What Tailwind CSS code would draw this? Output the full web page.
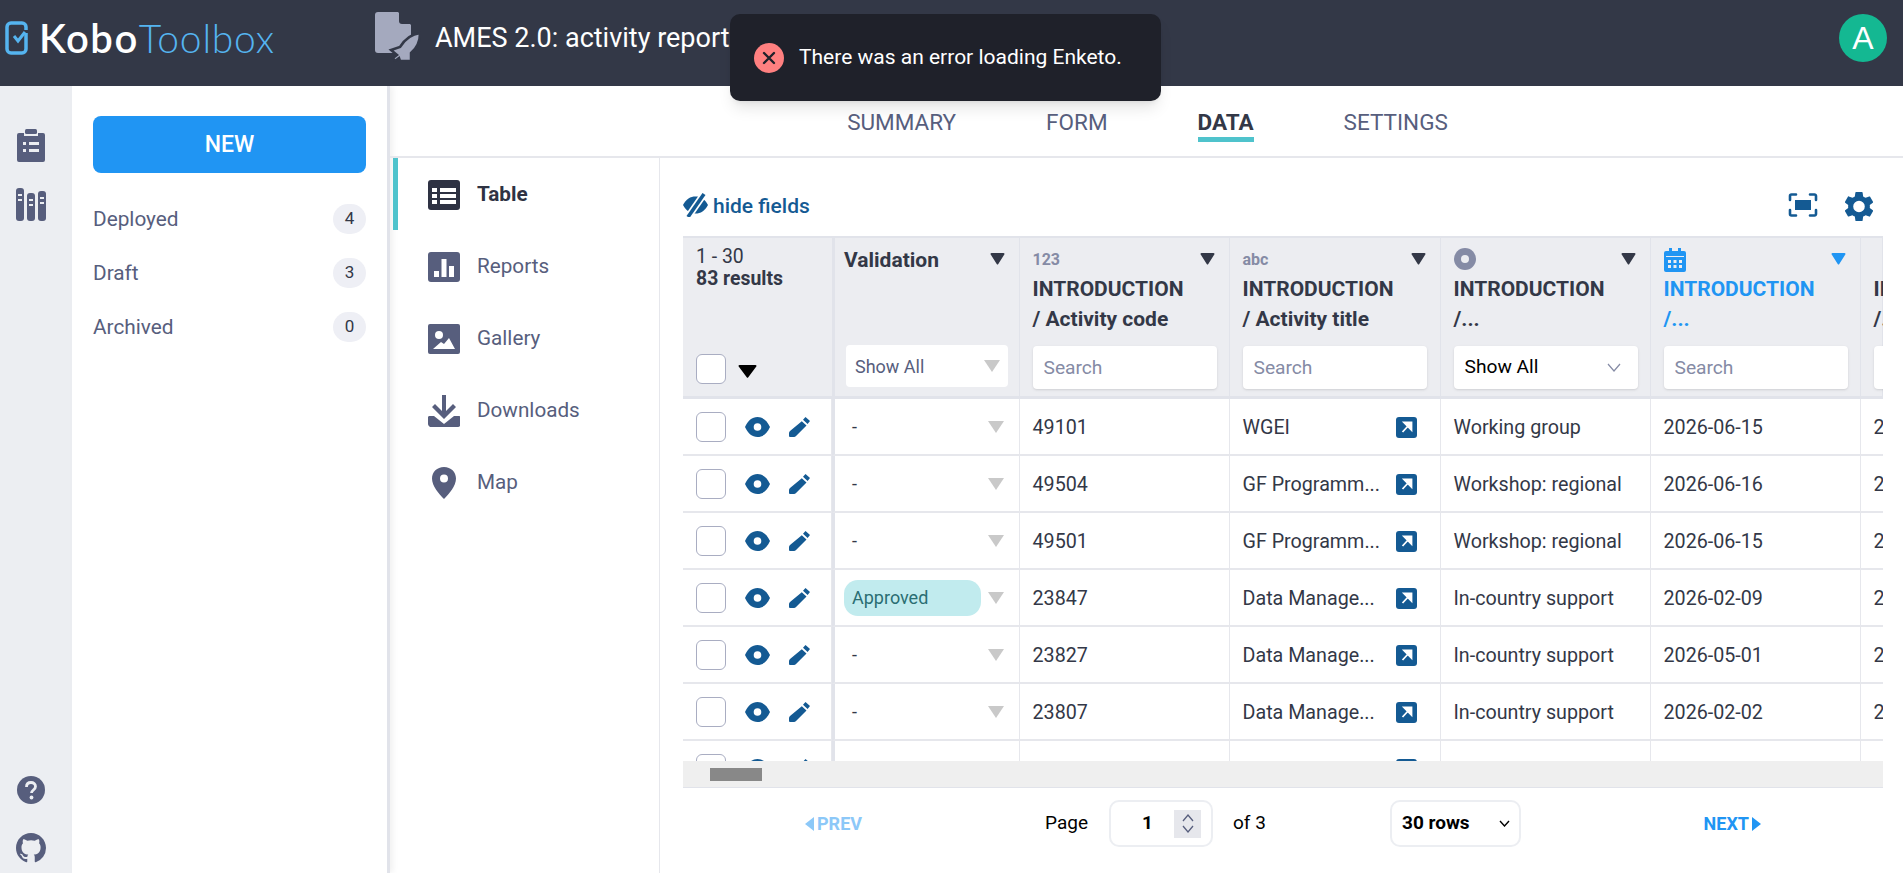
<!DOCTYPE html>
<html lang="en">
<head>
    <meta charset="UTF-8">
    <title>AMES 2.0: activity report | KoboToolbox</title>
    <script src="https://cdn.jsdelivr.net/npm/@tailwindcss/browser@4"></script>
</head>
<body class="font-['Roboto',sans-serif] h-screen overflow-hidden flex flex-col bg-white text-[#333847]">
    <!-- top bar -->
    <header class="h-[86px] shrink-0 bg-[#333847] flex items-center relative">
        <div class="w-[375px] shrink-0 flex items-center pl-[5px] mb-[10px]">
            <svg width="24" height="34" viewBox="0 0 24 34" fill="none" stroke="#55b4f0" stroke-width="3.5" class="mr-[10px]">
                <path d="M21 9V6a4 4 0 0 0-4-4H6a4 4 0 0 0-4 4v22a4 4 0 0 0 4 4h11a4 4 0 0 0 4-4V12"/>
                <path d="M9 15l4 5 7-9" stroke-width="3"/>
            </svg>
            <span class="font-['Lato',sans-serif] text-[40px] leading-none tracking-[1.500px] font-semibold text-white">Kobo</span><span class="font-['Lato',sans-serif] text-[39px] leading-none tracking-[0.800px] font-light text-[#55b4f0]">Toolbox</span>
        </div>
        <svg width="46" height="50" viewBox="0 0 46 50" class="shrink-0 mb-[12px]">
            <path d="M3 0h20l13 13v28H3a3 3 0 0 1-3-3V3a3 3 0 0 1 3-3z" fill="#a4a9be"/>
            <path d="M24 0v9a3 3 0 0 0 3 3h10V0z" fill="#333847"/>
            <path d="M45 21c-8 1-15 6-20 14l-9 3 6 5-4 3 2 3 4-3 1 3h11v-8c6-5 9-12 9-20z" fill="#a4a9be" stroke="#333847" stroke-width="2.5"/>
        </svg>
        <h1 class="ml-[14px] text-[27px] text-white mb-[9px] whitespace-nowrap">AMES 2.0: activity report</h1>
        <div class="ml-auto mr-[16px] mb-[10px] w-[48px] h-[48px] rounded-full bg-[#14b892] flex items-center justify-center text-white text-[32px] font-['Liberation_Sans',sans-serif]">A</div>
    </header>

    <!-- toast -->
    <div class="absolute left-[730px] top-[14px] w-[431px] h-[87px] bg-[#1f212a] rounded-[10px] shadow-lg flex items-center pl-[24px] text-white text-[21px]">
        <svg width="30" height="30" viewBox="0 0 30 30" class="mr-[15px] shrink-0">
            <circle cx="15" cy="15" r="15" fill="#ff8080"/>
            <path d="M10 10l10 10M20 10L10 20" stroke="#1f212a" stroke-width="2.4" stroke-linecap="round"/>
        </svg>
        There was an error loading Enketo.
    </div>

    <div class="flex flex-1 min-h-0">
        <!-- icon rail -->
        <nav class="w-[72px] shrink-0 bg-[#eceef2] flex flex-col items-center pt-[43px] pb-[10px] pr-[11px]">
            <svg width="28" height="33" viewBox="0 0 28 33">
                <path d="M2 4h5v3h14V4h5a2 2 0 0 1 2 2v25a2 2 0 0 1-2 2H2a2 2 0 0 1-2-2V6a2 2 0 0 1 2-2z" fill="#575e7d"/>
                <rect x="8" y="0" width="12" height="5" rx="1.5" fill="#575e7d"/>
                <path d="M6 13h3v3H6zM12 13h10v3H12zM6 20h3v3H6zM12 20h10v3H12z" fill="#eceef2"/>
            </svg>
            <svg width="30" height="33" viewBox="0 0 30 33" class="mt-[26px]">
                <rect x="0" y="0" width="8" height="33" rx="3" fill="#575e7d"/>
                <rect x="11" y="5" width="8" height="28" rx="3" fill="#575e7d"/>
                <rect x="22" y="3" width="8" height="30" rx="3" fill="#575e7d"/>
                <path d="M2 6h4v2H2zM2 11h4v2H2zM13 11h4v2h-4zM13 16h4v2h-4zM24 9h4v2h-4zM24 14h4v2h-4z" fill="#eceef2"/>
            </svg>
            <svg width="28" height="28" viewBox="0 0 28 28" class="mt-auto">
                <circle cx="14" cy="14" r="14" fill="#575e7d"/>
                <path d="M9.5 11c0-3 2-4.500 4.500-4.500s4.500 1.500 4.500 4c0 3.500-4 3.500-4 6.500" fill="none" stroke="#eceef2" stroke-width="2.800"/>
                <circle cx="14.500" cy="21.500" r="1.900" fill="#eceef2"/>
            </svg>
            <svg width="30" height="30" viewBox="0 0 16 16" class="mt-[29px]">
                <path fill="#575e7d" d="M8 0C3.580 0 0 3.580 0 8c0 3.540 2.290 6.530 5.470 7.590.4.070.55-.17.55-.38 0-.19-.01-.82-.01-1.490-2.010.37-2.530-.49-2.690-.94-.09-.23-.48-.94-.82-1.130-.28-.15-.68-.52-.01-.53.63-.01 1.080.58 1.230.82.720 1.210 1.870.870 2.330.660.070-.520.280-.870.510-1.070-1.780-.2-3.640-.890-3.640-3.950 0-.870.310-1.590.820-2.150-.080-.2-.360-1.020.080-2.120 0 0 .670-.210 2.200.820.640-.180 1.320-.270 2-.270s1.360.090 2 .270c1.530-1.040 2.200-.820 2.200-.820.440 1.100.160 1.920.080 2.120.510.560.820 1.270.820 2.150 0 3.070-1.870 3.750-3.650 3.950.290.250.540.730.540 1.480 0 1.070-.010 1.930-.010 2.200 0 .210.150.460.550.380A8.010 8.010 0 0 0 16 8c0-4.420-3.580-8-8-8z"/>
            </svg>
        </nav>

        <!-- sidebar -->
        <aside class="w-[318px] shrink-0 border-r-[3px] border-[#e1e3ea] shadow-[3px_0_6px_rgba(0,0,0,0.06)] pt-[30px] pl-[21px] pr-[21px] text-[#575e7d] text-[20.800px]">
            <button class="w-[273px] h-[57px] rounded-[8px] bg-[#2095f3] text-white text-[23px] font-medium pt-[2px]">NEW</button>
            <div class="mt-[31px] flex items-center justify-between h-[30px]"><span class="pt-[1px]">Deployed</span><span class="w-[33px] h-[30px] rounded-full bg-[#eeeff5] text-[#333847] text-[17px] flex items-center justify-center">4</span></div>
            <div class="mt-[24px] flex items-center justify-between h-[30px]"><span class="pt-[1px]">Draft</span><span class="w-[33px] h-[30px] rounded-full bg-[#eeeff5] text-[#333847] text-[17px] flex items-center justify-center">3</span></div>
            <div class="mt-[24px] flex items-center justify-between h-[30px]"><span class="pt-[1px]">Archived</span><span class="w-[33px] h-[30px] rounded-full bg-[#eeeff5] text-[#333847] text-[17px] flex items-center justify-center">0</span></div>
        </aside>

        <main class="flex-1 min-w-0 flex flex-col">
            <!-- tabs -->
            <div class="h-[72px] shrink-0 border-b-2 border-[#e6e7ec] relative flex justify-center text-[22.500px] text-[#575e7d]">
                <div class="flex gap-[90px] pl-[2px] pt-[21px] leading-[30px]">
                    <span>SUMMARY</span>
                    <span>FORM</span>
                    <span class="font-bold text-[#333847] border-b-[5px] border-[#4fc3cc] h-[35px]">DATA</span>
                    <span>SETTINGS</span>
                </div>
            </div>

            <div class="flex-1 min-h-0 flex">
                <!-- data sub nav -->
                <div class="w-[267px] ml-[3px] shrink-0 border-r border-[#e6e7ec] text-[20.700px] text-[#575e7d]">
                    <div class="h-[72px] border-l-[5px] border-[#4fc3cc] pl-[30px] pt-[2px] flex items-center gap-[17px] font-bold text-[#2e3243]">
                        <svg width="32" height="30" viewBox="0 0 32 30"><rect width="32" height="30" rx="3" fill="#2e3243"/><path d="M4 8h5v4H4zM12 8h16v4H12zM4 14h5v4H4zM12 14h16v4H12zM4 20h5v4H4zM12 20h16v4H12z" fill="#fff"/></svg>
                        Table
                    </div>
                    <div class="h-[72px] pl-[35px] pt-[2px] flex items-center gap-[17px]">
                        <svg width="32" height="30" viewBox="0 0 32 30"><rect width="32" height="30" rx="3" fill="#575e7d"/><path d="M6 19h5v6H6zM13.500 7h5v18h-5zM21 14h5v11h-5z" fill="#fff"/></svg>
                        Reports
                    </div>
                    <div class="h-[72px] pl-[35px] pt-[2px] flex items-center gap-[17px]">
                        <svg width="32" height="30" viewBox="0 0 32 30"><rect width="32" height="30" rx="2" fill="#575e7d"/><circle cx="11" cy="11" r="4" fill="#fff"/><path d="M5 25l8-7 3 2 5-6 6 11z" fill="#fff"/></svg>
                        Gallery
                    </div>
                    <div class="h-[72px] pl-[35px] pt-[2px] flex items-center gap-[17px]">
                        <svg width="32" height="32" viewBox="0 0 32 32"><path d="M14 0h4v16l7-7 3 3-12 12L4 12l3-3 7 7z" fill="#575e7d"/><path d="M1 21h5l10 8 10-8h5a2 2 0 0 1 2 2v5a4 4 0 0 1-3 4H2a4 4 0 0 1-2-4v-5a2 2 0 0 1 1-2z" fill="#575e7d"/></svg>
                        Downloads
                    </div>
                    <div class="h-[72px] pl-[35px] pt-[2px] flex items-center gap-[17px]">
                        <svg width="32" height="32" viewBox="0 0 32 32"><path fill-rule="evenodd" d="M16 0c7 0 12 5 12 11.500C28 19 21 27 16 32 11 27 4 19 4 11.500 4 5 9 0 16 0zm0 7.500a4 4 0 1 0 0 8 4 4 0 0 0 0-8z" fill="#575e7d"/></svg>
                        Map
                    </div>
                </div>

                <div class="flex-1 min-w-0 pl-[23px] pr-[20px] pt-[34px]">
                    <!-- table toolbar -->
                    <div class="h-[44px] flex items-start text-[#145a93] text-[21px] font-medium">
                        <svg width="25" height="24" viewBox="0 0 25 24" class="mr-[5px] mt-[1px]">
                            <path d="M0 12C3 6 7.500 3.500 12.500 3.500S22 6 25 12c-3 6-7.500 8.500-12.500 8.500S3 18 0 12z" fill="#145a93"/>
                            <path d="M5 24L21 1" stroke="#fff" stroke-width="7"/>
                            <path d="M5 24L21 1" stroke="#145a93" stroke-width="3.600"/>
                        </svg>
                        <span class="-mt-[1px]">hide fields</span>
                        <svg width="30" height="24" viewBox="0 0 30 24" class="ml-auto mr-[27px] mt-[1px]" fill="none" stroke="#145a93" stroke-width="2.600" stroke-linecap="round"><path d="M2 7V3a1.500 1.500 0 0 1 1.500-1.500H8M22 1.500h4.500A1.500 1.500 0 0 1 28 3v4M28 17v4a1.500 1.500 0 0 1-1.500 1.500H22M8 22.500H3.500A1.500 1.500 0 0 1 2 21v-4"/><rect x="7" y="7" width="16" height="10" fill="#145a93" stroke="none"/></svg>
                        <svg width="28" height="29" viewBox="2.400 2 19.200 20" class="mr-[10px]"><path fill="#145a93" d="M19.430 12.980c.04-.32.070-.64.070-.98s-.03-.66-.07-.98l2.110-1.650c.19-.15.240-.42.120-.64l-2-3.460c-.12-.22-.39-.3-.61-.22l-2.490 1c-.52-.4-1.080-.73-1.690-.98l-.38-2.650A.49.49 0 0 0 14 2h-4c-.25 0-.46.180-.49.420l-.38 2.650c-.61.250-1.170.59-1.690.98l-2.490-1c-.23-.09-.49 0-.61.220l-2 3.460c-.13.220-.07.490.12.640l2.110 1.650c-.04.320-.07.650-.07.980s.03.660.07.980l-2.110 1.650c-.19.150-.24.420-.12.640l2 3.460c.12.220.39.3.61.220l2.490-1c.52.400 1.080.730 1.690.980l.38 2.650c.03.240.24.420.49.420h4c.25 0 .46-.18.49-.42l.38-2.650c.61-.25 1.170-.59 1.690-.98l2.490 1c.23.090.49 0 .61-.22l2-3.460c.12-.22.070-.49-.12-.64zM12 16a4 4 0 1 1 0-8 4 4 0 0 1 0 8z"/></svg>
                    </div>

                    <!-- table -->
                    <div class="w-[1200px] h-[525px] overflow-hidden border-t-2 border-[#e1e3ea] text-[19.700px]">
                        <div id="tableGrid" class="grid grid-cols-[149px_188px_210px_211px_210px_210px_22px] overflow-hidden"></div>
                    </div>
                    <div class="w-[1200px] h-[27px] bg-[#efefef] border-b border-[#e1e3ea] pt-[7px] pl-[27px]">
                        <div class="w-[52px] h-[13px] bg-[#888888]"></div>
                    </div>

                    <!-- pagination -->
                    <div class="w-[1200px] h-[47px] mt-[12px] flex items-center text-[19px] text-black">
                        <span class="ml-[122px] w-[240px] flex items-center gap-[3px] text-[18px] font-bold text-[#8cc8f8]">
                            <svg width="9" height="14" viewBox="0 0 9 14"><path d="M9 0v14L0 7z" fill="#8cc8f8"/></svg>PREV
                        </span>
                        <span class="w-[64px]">Page</span>
                        <div class="w-[104px] h-[47px] border-2 border-[#eceef2] rounded-[10px] flex items-center font-bold">
                            <span class="w-[63px] text-center pl-[10px]">1</span>
                            <div class="w-[27px] h-[28px] bg-[#e6e7ec] flex flex-col items-center justify-center gap-[3px]">
                                <svg width="12" height="8" viewBox="0 0 12 8" fill="none" stroke="#575e7d" stroke-width="1.300"><path d="M1 7l5-6 5 6"/></svg>
                                <svg width="12" height="8" viewBox="0 0 12 8" fill="none" stroke="#575e7d" stroke-width="1.300"><path d="M1 1l5 6 5-6"/></svg>
                            </div>
                        </div>
                        <span class="ml-[20px] w-[157px]">of 3</span>
                        <div class="w-[131px] h-[47px] border-2 border-[#eceef2] rounded-[10px] pl-[10px] font-bold flex items-center">30 rows
                            <svg width="11" height="7" viewBox="0 0 11 7" class="ml-auto mr-[9px]" fill="none" stroke="#000" stroke-width="1.400"><path d="M1 1l4.500 5L10 1"/></svg>
                        </div>
                        <span class="ml-auto mr-[122px] flex items-center gap-[3px] text-[18px] font-bold text-[#2095f3]">
                            NEXT<svg width="9" height="14" viewBox="0 0 9 14"><path d="M0 0v14l9-7z" fill="#2095f3"/></svg>
                        </span>
                    </div>
                </div>
            </div>
        </main>
    </div>

    <script>
        const rows = [
            ['-', '49101', 'WGEI', 'Working group', '2026-06-15'],
            ['-', '49504', 'GF Programm...', 'Workshop: regional', '2026-06-16'],
            ['-', '49501', 'GF Programm...', 'Workshop: regional', '2026-06-15'],
            ['Approved', '23847', 'Data Manage...', 'In-country support', '2026-02-09'],
            ['-', '23827', 'Data Manage...', 'In-country support', '2026-05-01'],
            ['-', '23807', 'Data Manage...', 'In-country support', '2026-02-02'],
            ['-', '', '', '', '']
        ];

        const sortArrow = (color) => `<svg width="15" height="12" viewBox="0 0 15 12" class="ml-auto mr-[14px] mt-[5px]"><path d="M1.500 0h12a1 1 0 0 1 .8 1.600L8.300 11a1 1 0 0 1-1.600 0L.7 1.600A1 1 0 0 1 1.500 0z" fill="${color}"/></svg>`;
        const eye = `<svg width="25" height="20" viewBox="0 0 25 20"><path fill-rule="evenodd" d="M12.500 0C18 0 22 3.500 25 10c-3 6.500-7 10-12.500 10S3 16.500 0 10C3 3.500 7 0 12.500 0zm0 6.200a3.800 3.800 0 1 0 0 7.600 3.800 3.800 0 0 0 0-7.600z" fill="#145a93"/></svg>`;
        const pencil = `<svg width="21" height="20" viewBox="0 0 21 20"><path d="M16.500 0L21 4l-2.400 3-4.600-4.200zM12.800 4.300l4.700 4.200L7 19a3 3 0 0 1-2 1H1a1 1 0 0 1-1-1v-3a3 3 0 0 1 1-2z" fill="#145a93"/></svg>`;
        const linkIcon = `<svg width="21" height="21" viewBox="0 0 21 21" class="absolute right-[23px] top-[18px]"><rect width="21" height="21" rx="3" fill="#145a93"/><path d="M6.500 15l6.500-7M8 5.500h7.500V13z" fill="#fff" stroke="#fff" stroke-width="1.800"/></svg>`;
        const greyArrow = `<svg width="16" height="12" viewBox="0 0 16 12"><path d="M0 0h16l-8 12z" fill="#c9c9c9"/></svg>`;

        const headCell = 'h-[161px] bg-[#ecedf1] border-r border-b-[3px] border-r-[#e1e3ea] border-b-[#e1e3ea] pt-[10px]';
        const bodyCell = 'h-[57px] border-r border-b-2 border-r-[#e6e7ec] border-b-[#e6e7ec] flex items-center relative';
        const searchBox = 'w-[184px] h-[43px] mt-[12px] bg-white rounded-[4px] shadow-sm pl-[11px] text-[19.200px] placeholder:text-[#858ba5] outline-none';

        function fieldHead(icon, title, second, control, color) {
            return `<div class="${headCell} pl-[12.500px]">
                <div class="h-[26px] flex items-start">${icon}${sortArrow(color)}</div>
                <div class="h-[60px] leading-[30px] font-bold text-[21px] whitespace-nowrap" style="color:${color}">${title}<br>${second}</div>
                ${control}
            </div>`;
        }

        const numberIcon = '<span class="text-[16px] leading-[24px] font-bold text-[#858ba5]">123</span>';
        const textIcon = '<span class="text-[16px] leading-[24px] font-bold text-[#858ba5]">abc</span>';
        const radioIcon = '<svg width="22" height="22" viewBox="0 0 22 22"><circle cx="11" cy="11" r="11" fill="#858ba5"/><circle cx="11" cy="11" r="4" fill="#ecedf1"/></svg>';
        const dateIcon = '<svg width="22" height="24" viewBox="0 0 22 24"><path d="M5 0h3v3h6V0h3v3h3a2 2 0 0 1 2 2v17a2 2 0 0 1-2 2H2a2 2 0 0 1-2-2V5a2 2 0 0 1 2-2h3z" fill="#2095f3"/><path d="M2 8h18v1H2zM4 12h3v3H4zM9.500 12h3v3h-3zM15 12h3v3h-3zM4 17h3v3H4zM9.500 17h3v3h-3zM15 17h3v3h-3z" fill="#ecedf1"/></svg>';
        const showAllSelect = `<div class="w-[184px] h-[43px] mt-[12px] bg-white rounded-[4px] shadow-sm pl-[11px] text-[19.200px] font-normal text-black flex items-center">Show All<svg width="14" height="9" viewBox="0 0 14 9" class="ml-auto mr-[17px]" fill="none" stroke="#858ba5" stroke-width="1.200"><path d="M1 1l6 7 6-7"/></svg></div>`;
        const search = `<input class="${searchBox}" placeholder="Search">`;

        let html = `
            <div class="${headCell} pl-[13px] relative border-r-0">
                <div class="-mt-[2px] leading-[22px] text-[19.400px]">1 - 30<br><b class="font-bold">83 results</b></div>
                <div class="absolute left-[13px] top-[116px] flex items-center gap-[12px]">
                    <span class="w-[30px] h-[30px] bg-white border border-[#a9adc2] rounded-[6px]"></span>
                    <svg width="19" height="13" viewBox="0 0 19 13" class="mt-[4px]"><path d="M1.500 0h16a1 1 0 0 1 .8 1.600L10.300 12.300a1 1 0 0 1-1.600 0L.7 1.600A1 1 0 0 1 1.500 0z" fill="#000"/></svg>
                </div>
            </div>
            <div class="${headCell} border-l-[3px] border-l-[#e1e3ea] pl-[9px] relative">
                <div class="h-[26px] flex items-start font-bold text-[21px]"><span class="-mt-[3px]">Validation</span>${sortArrow('#333847')}</div>
                <div class="absolute left-[11px] top-[107px] w-[162px] h-[42px] bg-white rounded-[4px] pl-[9px] text-[18px] text-[#575e7d] flex items-center">Show All<span class="ml-auto mr-[8px] flex">${greyArrow}</span></div>
            </div>
            ${fieldHead(numberIcon, 'INTRODUCTION', '/ Activity code', search, '#333847')}
            ${fieldHead(textIcon, 'INTRODUCTION', '/ Activity title', search, '#333847')}
            ${fieldHead(radioIcon, 'INTRODUCTION', '/...', showAllSelect, '#333847')}
            ${fieldHead(dateIcon, 'INTRODUCTION', '/...', search, '#2095f3')}
            ${fieldHead('<svg width="22" height="24" viewBox="0 0 22 24"><path d="M5 0h3v3h6V0h3v3h3a2 2 0 0 1 2 2v17a2 2 0 0 1-2 2H2a2 2 0 0 1-2-2V5a2 2 0 0 1 2-2h3z" fill="#858ba5"/></svg>', 'INTRODUCTION', '/...', search, '#333847')}`;

        rows.forEach((row) => {
            const validation = row[0] === 'Approved'
                ? '<span class="w-[137px] h-[36px] rounded-[14px] bg-[#c1ebee] text-[#2a6e73] text-[18px] flex items-center pl-[8px]">Approved</span>'
                : '<span class="w-[137px] pl-[8px] text-[18px]">-</span>';
            html += `
                <div class="${bodyCell} pl-[13px]">
                    <span class="w-[30px] h-[30px] border border-[#a9adc2] rounded-[6px] mr-[19px] shrink-0"></span>
                    <span class="mr-[19px]">${eye}</span>${pencil}
                </div>
                <div class="${bodyCell} border-l-[3px] border-l-[#e1e3ea] pl-[11px]"><span class="-ml-[2px] flex items-center">${validation}<span class="ml-[7px] flex">${greyArrow}</span></span></div>
                <div class="${bodyCell} pl-[12.500px] pt-[2px]">${row[1]}</div>
                <div class="${bodyCell} pl-[12.500px] pt-[2px]">${row[2]}${linkIcon}</div>
                <div class="${bodyCell} pl-[12.500px] pt-[2px]">${row[3]}</div>
                <div class="${bodyCell} pl-[12.500px] pt-[2px]">${row[4]}</div>
                <div class="${bodyCell} pl-[12.500px] pt-[2px] border-r-0 overflow-hidden">${row[4] ? '2' : ''}</div>`;
        });
        document.getElementById('tableGrid').innerHTML = html;
    </script>
</body>
</html>
